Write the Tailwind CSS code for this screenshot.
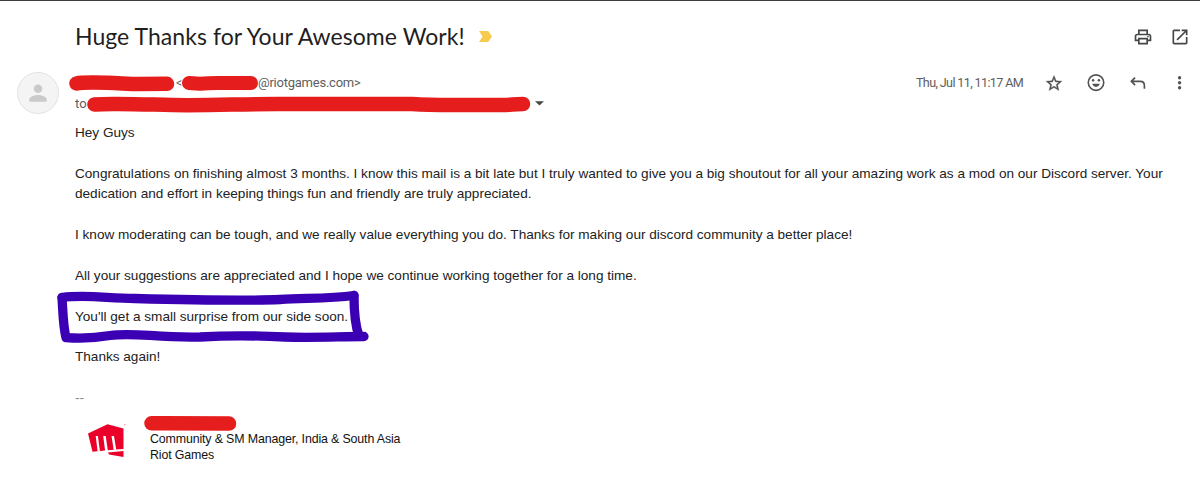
<!DOCTYPE html>
<html lang="en">

<head>
    <meta charset="UTF-8">
    <meta name="viewport" content="width=device-width, initial-scale=1.0">
    <script src="https://cdn.jsdelivr.net/npm/@tailwindcss/browser@4"></script>
    <title>Huge Thanks for Your Awesome Work!</title>
</head>

<body class="w-[1200px] h-[497px] overflow-hidden bg-white border-t border-[#3c3c3e] font-['Liberation_Sans',sans-serif] text-[#222]">
    <!-- subject -->
    <header class="h-[71px] flex items-center pl-[75px] pr-[10px]">
        <h1 class="font-[Lato,sans-serif] text-[23px] tracking-[0.05px] text-[#1f1f1f] whitespace-nowrap w-[404px] shrink-0">Huge Thanks for Your Awesome Work!</h1>
        <svg class="w-[13px] h-[11px]" viewBox="0 0 13 11" fill="#f7cb4d">
            <path d="M0 0H9.2L13 5.5L9.2 11H0L3.6 5.5Z" />
        </svg>
        <div class="ml-auto flex gap-[17px] text-[#444746]">
            <svg class="w-5 h-5" viewBox="0 0 24 24" fill="currentColor">
                <path d="M19 8h-1V3H6v5H5c-1.660 0-3 1.340-3 3v6h4v4h12v-4h4v-6c0-1.660-1.340-3-3-3zM8 5h8v3H8V5zm8 14H8v-4h8v4zm2-4v-2H6v2H4v-4c0-.550.450-1 1-1h14c.550 0 1 .450 1 1v4h-2z" />
                <circle cx="18" cy="11.500" r="1" />
            </svg>
            <svg class="w-5 h-5" viewBox="0 0 24 24" fill="currentColor">
                <path d="M19 19H5V5h7V3H5c-1.110 0-2 .9-2 2v14c0 1.100.890 2 2 2h14c1.100 0 2-.9 2-2v-7h-2v7zM14 3v2h3.590l-9.830 9.830 1.410 1.410L19 6.410V10h2V3h-7z" />
            </svg>
        </div>
    </header>

    <!-- sender -->
    <section class="h-[51px] flex items-start pl-[17px] font-['Roboto',sans-serif] text-[13px] text-[#5e5e5e]">
        <div class="w-[42px] h-[42px] shrink-0 rounded-full bg-[#f4f4f4] border border-[#e3e3e3] flex items-center justify-center">
            <svg class="w-[26px] h-[26px]" viewBox="0 0 24 24" fill="#cacaca">
                <circle cx="12" cy="8" r="3.900" />
                <path d="M4 20v-2c0-2.700 5-4.100 8-4.100s8 1.400 8 4.100v2z" />
            </svg>
        </div>
        <div class="ml-[10px]">
            <div class="h-[22px] flex items-center">
                <svg class="w-[107px] h-[22px]" viewBox="0 0 107 22" fill="none" stroke="#e61d1d" stroke-width="14.500" stroke-linecap="round" stroke-linejoin="round">
                    <path d="M7.500 11.500Q12 10.500 25 10.600C45 10.600 58 12 70 12L98 11.800" />
                </svg>
                <span class="w-[6px] text-[12px]">&lt;</span>
                <svg class="w-[76px] h-[22px]" viewBox="0 0 76 22" fill="none" stroke="#e61d1d" stroke-width="14" stroke-linecap="round" stroke-linejoin="round">
                    <path d="M7 11L18 11.800Q26 11 36 11H69" />
                </svg>
                <span class="whitespace-nowrap tracking-[-0.24px]">@riotgames.com&gt;</span>
            </div>
            <div class="h-5 flex items-center pl-[6px]">
                <span class="w-[12px]">to</span>
                <svg class="w-[444px] h-5" viewBox="0 0 444 20" fill="none" stroke="#e61d1d" stroke-width="14.500" stroke-linecap="round" stroke-linejoin="round">
                    <path d="M7.500 10.500Q15 9.800 30 9.900C60 10 75 11.200 100 11.200C140 11.200 150 10 190 10H325C340 11 350 11 365 11H415C424 11 426 10 436 10" />
                </svg>
                <svg class="ml-[3.5px] w-[9px] h-[5px] -mt-px" viewBox="0 0 9 5" fill="#444746">
                    <path d="M0 .3H9L4.500 4.600Z" />
                </svg>
            </div>
        </div>
        <div class="ml-auto h-[22px] flex items-center text-[#505352]">
            <time class="whitespace-nowrap w-[128px] text-[12.6px] tracking-[-0.64px] text-[#5e5e5e]">Thu, Jul 11, 11:17 AM</time>
            <div class="flex gap-[22px] pr-[10px]">
                <svg class="w-5 h-5" viewBox="-.5 -1 25 25" fill="currentColor" stroke="currentColor" stroke-width=".4">
                    <path d="M22 9.240l-7.190-.620L12 2 9.190 8.630 2 9.240l5.460 4.730L5.820 21 12 17.270 18.180 21l-1.630-7.030L22 9.240zM12 15.400l-3.760 2.270 1-4.280-3.320-2.880 4.380-.380L12 6.100l1.710 4.040 4.380.380-3.320 2.880 1 4.280L12 15.400z" />
                </svg>
                <svg class="w-5 h-5" viewBox="0 0 24 24">
                    <circle cx="12" cy="11.500" r="9.300" fill="none" stroke="currentColor" stroke-width="1.900" />
                    <circle cx="8.500" cy="8.800" r="1.500" fill="currentColor" />
                    <circle cx="15.500" cy="8.800" r="1.500" fill="currentColor" />
                    <path d="M7.500 13h9c-.600 2.300-2.300 3.700-4.500 3.700s-3.900-1.400-4.500-3.700z" fill="currentColor" />
                </svg>
                <svg class="w-5 h-5" viewBox="0 0 24 24" fill="none" stroke="currentColor" stroke-width="2">
                    <path d="M8.500 5.500L4 10l4.500 4.500M4 10h11c3.300 0 4.700 2.200 4.700 5.500V19" />
                </svg>
                <svg class="w-5 h-5" viewBox="0 0 24 24" fill="currentColor">
                    <circle cx="11.500" cy="5.700" r="2" />
                    <circle cx="11.500" cy="11.700" r="2" />
                    <circle cx="11.500" cy="17.700" r="2" />
                </svg>
            </div>
        </div>
    </section>

    <!-- message -->
    <main class="pl-[75px] text-[13.6px] leading-[20.4px] tracking-[-0.006px] whitespace-nowrap">
        <p>Hey Guys</p>
        <p class="mt-[20.4px]">Congratulations on finishing almost 3 months. I know this mail is a bit late but I truly wanted to give you a big shoutout for all your amazing work as a mod on our Discord server. Your<br>dedication and effort in keeping things fun and friendly are truly appreciated.</p>
        <p class="mt-[20.4px]">I know moderating can be tough, and we really value everything you do. Thanks for making our discord community a better place!</p>
        <p class="mt-[20.4px]">All your suggestions are appreciated and I hope we continue working together for a long time.</p>
        <p class="mt-[20.4px] relative">You'll get a small surprise from our side soon.
            <!-- marker drawn around the line -->
            <svg class="absolute left-[-20px] top-[-17px] w-[320px] h-[60px]" viewBox="0 0 320 60" fill="none" stroke="#3b00b3" stroke-width="9.300" stroke-linecap="round" stroke-linejoin="round">
                <path d="M7 7.500C30 4.500 50 8 80 8.500C140 10 190 11 225 9.500C255 8 275 8.500 299 5.500" />
                <path d="M7 7.500C8 22 8 36 11 47.500C30 49 40 48 55 45.500C80 42 100 48 145 47C180 45 210 46 230 47C260 48 285 46.500 309 46.500" />
                <path d="M299 5.500C299 25 300 35 304 46" />
            </svg>
        </p>
        <p class="mt-[20.4px]">Thanks again!</p>
        <p class="mt-[20.4px] text-[#888]">--</p>
    </main>

    <!-- signature -->
    <footer class="flex pl-[87px] mt-[6px]">
        <svg class="mt-[9px] w-[39px] h-[34px]" viewBox="0 0 39 34" fill="#eb0029">
            <path d="M1 9.500L20.500 .3L36.500 4.500V25L29.200 25.500L27 12H24.500L26.700 25.700L20.800 26.200L18.700 12H16.200L18.100 26.400L12.900 27L10.900 12H8.700L10.600 27.200L5.500 27.800Z" />
            <path d="M21 28.600L36.500 27V33L22 30.400Z" />
            <circle cx="37.800" cy=".8" r=".5" />
        </svg>
        <div class="ml-[17px] text-[12.4px] tracking-[-0.14px] leading-[16px] text-[#111] whitespace-nowrap">
            <svg class="block w-[95px] h-[17px]" viewBox="0 0 95 17" fill="none" stroke="#e61d1d" stroke-width="14.500" stroke-linecap="round">
                <path d="M8.500 8.300L20 8.300L86 8.600" />
            </svg>
            <div class="pl-[7px] -mt-[0.5px]">Community &amp; SM Manager, India &amp; South Asia<br>Riot Games</div>
        </div>
    </footer>
</body>

</html>
